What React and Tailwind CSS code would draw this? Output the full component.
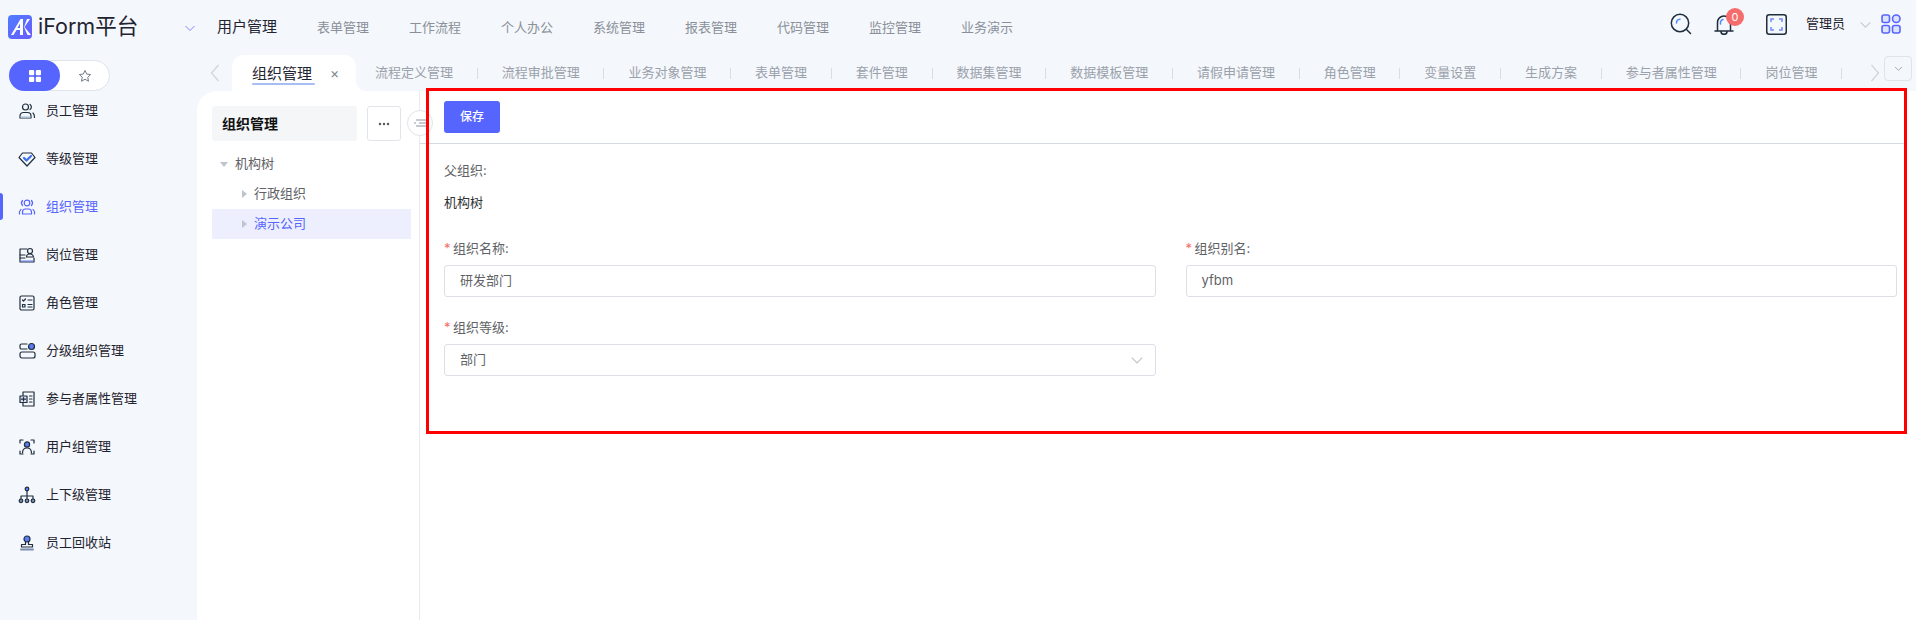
import React from "react";

const S = "#1f2d3d";
const B = "#5b7cf5";

const Ico = ({ children, color = S }) => (
  <svg width="18" height="18" viewBox="0 0 18 18" fill="none" stroke={color} strokeWidth="1.2" strokeLinecap="round" strokeLinejoin="round" className="shrink-0">
    {children}
  </svg>
);

const icons = {
  staff: (
    <Ico>
      <circle cx="7.5" cy="5" r="3" />
      <path d="M2 16v-2a3.5 3.5 0 0 1 3.5-3.5h4A3.5 3.5 0 0 1 13 14v2z" />
      <path d="M2.6 14h9.8v1.6H2.6z" fill="#c9d6f2" stroke="none" />
      <path d="M12 2.5a3 3 0 0 1 0 5M15 11c1 .8 1.5 2 1.5 4.5" />
    </Ico>
  ),
  level: (
    <Ico>
      <path d="M4.5 3h9L17 7.5 9 16 1 7.5z" />
      <path d="M6 8l2.5 2.5L13 6" stroke="#3f6fe8" strokeWidth="2.2" />
    </Ico>
  ),
  org: (
    <Ico color="#5765ff">
      <circle cx="9" cy="5" r="2.8" />
      <path d="M4.5 16v-2a3 3 0 0 1 3-3h3a3 3 0 0 1 3 3v2z" />
      <path d="M4.5 2.5a3.8 3.8 0 0 0 0 5M13.5 2.5a3.8 3.8 0 0 1 0 5M1.5 16v-2.5L3 11.5M16.5 16v-2.5L15 11.5" />
    </Ico>
  ),
  post: (
    <Ico>
      <path d="M9 3H2v13h14v-4" />
      <path d="M2 9h5M2 12h5" />
      <circle cx="12" cy="5" r="2.5" />
      <path d="M8.5 11a3.5 3 0 0 1 7 0z" />
      <path d="M3 15h12" stroke={B} opacity=".5" strokeWidth="2" />
    </Ico>
  ),
  role: (
    <Ico>
      <rect x="2" y="2" width="14" height="14" rx="1.5" />
      <path d="M4.5 6l1 1 2-2M10 6h4M4.5 10.5h2.5v2.5H4.5zM10 10.5h4M10 13h4" />
    </Ico>
  ),
  sub: (
    <Ico>
      <path d="M9 2H3.5A1.5 1.5 0 0 0 2 3.5v2A1.5 1.5 0 0 0 3.5 7H9" />
      <rect x="2" y="10" width="15" height="6" rx="2" />
      <circle cx="13.5" cy="4.5" r="3" fill={B} stroke={S} />
    </Ico>
  ),
  attr: (
    <Ico>
      <path d="M5 2h11v14H5v-3M5 6V2" />
      <rect x="2" y="6" width="7" height="6.5" fill="#dbe3f3" />
      <path d="M5.5 7.5v3.5M3.5 9.2h4M11.5 6H14M11.5 9H14M11.5 12H14" />
    </Ico>
  ),
  group: (
    <Ico>
      <path d="M2 5V2h3M13 2h3v3M2 13v3h3M13 16h3v-3" />
      <circle cx="9" cy="6.5" r="2.6" fill={B} />
      <path d="M4.5 15c0-3 1.8-5 4.5-5s4.5 2 4.5 5" />
    </Ico>
  ),
  tree: (
    <Ico>
      <circle cx="9" cy="3" r="1.8" fill={B} />
      <path d="M9 5v5M3 13v-3h12v3M9 10v3" />
      <circle cx="3" cy="14.8" r="1.8" fill="#7b8db0" />
      <circle cx="9" cy="14.8" r="1.8" fill="#7b8db0" />
      <circle cx="15" cy="14.8" r="1.8" fill="#7b8db0" />
    </Ico>
  ),
  bin: (
    <Ico>
      <circle cx="9" cy="5" r="3" fill={B} />
      <path d="M7.5 8v2.5H3.5V13h11v-2.5h-4V8" />
      <path d="M3 15.5h12" strokeWidth="2" stroke="#7b8db0" />
    </Ico>
  ),
};

const menu = [
  ["员工管理", "staff"],
  ["等级管理", "level"],
  ["组织管理", "org"],
  ["岗位管理", "post"],
  ["角色管理", "role"],
  ["分级组织管理", "sub"],
  ["参与者属性管理", "attr"],
  ["用户组管理", "group"],
  ["上下级管理", "tree"],
  ["员工回收站", "bin"],
];

const navs = ["表单管理", "工作流程", "个人办公", "系统管理", "报表管理", "代码管理", "监控管理", "业务演示"];
const tabs = ["流程定义管理", "流程审批管理", "业务对象管理", "表单管理", "套件管理", "数据集管理", "数据模板管理", "请假申请管理", "角色管理", "变量设置", "生成方案", "参与者属性管理", "岗位管理"];

const Chev = ({ className, color = "#a9b0bb", size = 12, w = 1 }) => (
  <svg width={size} height={size} viewBox="0 0 12 12" fill="none" stroke={color} strokeWidth={w} className={className}>
    <path d="M1.5 4l4.5 4.5L10.5 4" />
  </svg>
);

const Label = ({ children, req }) => (
  <div className="h-[17px] flex items-center text-[13px] leading-[17px] text-[#606266]">
    {req && <span className="text-[#f56c6c] w-[9px]">*</span>}
    {children}
  </div>
);

const Field = ({ label, value, select }) => (
  <div className="flex flex-col gap-[8px]">
    <Label req>{label}</Label>
    <div className="h-[32px] rounded-[3px] border border-[#dcdfe6] bg-white flex items-center justify-between pl-[15px] pr-[11px] text-[13px] text-[#606266]">
      <span>{value}</span>
      {select && <Chev color="#c0c4cc" size={14} />}
    </div>
  </div>
);

export default function App() {
  return (
    <div className="relative w-[1916px] h-[620px] overflow-hidden bg-[#f4f7fb] flex flex-col font-['Inter','Noto_Sans_CJK_SC',sans-serif]">
      {/* header */}
      <header className="h-[55px] shrink-0 flex items-center">
        <div className="flex items-center w-[184px] pl-[8px] gap-[6px] pb-[2px]">
          <svg width="24" height="24" viewBox="0 0 24 24">
            <defs>
              <linearGradient id="lg" x1="0" y1="0" x2="1" y2="1">
                <stop offset="0" stopColor="#4f7cff" />
                <stop offset="1" stopColor="#6a5cff" />
              </linearGradient>
            </defs>
            <rect width="24" height="24" rx="4" fill="url(#lg)" />
            <path d="M3 20L12.5 4h2.5v16h-3v-5H8.5l-3 5z" fill="#fff" />
            <path d="M16.5 12L22 4h-3l-3 8 3.5 8H23z" fill="#fff" />
            <path d="M9.5 13H12V8.5z" fill="#5a6dff" />
          </svg>
          <span className="text-[21.5px] leading-none text-[#1f2430]">iForm平台</span>
        </div>
        <Chev color="#7f86ff" size={12} />
        <span className="ml-[21px] w-[60px] text-[15px] text-[#1f2430]">用户管理</span>
        <nav className="ml-[40px] flex gap-[40px] text-[13px] text-[#8a9099]">
          {navs.map((n) => (
            <span key={n}>{n}</span>
          ))}
        </nav>
        <div className="ml-auto flex items-center pb-[7px]">
          <svg width="22" height="22" viewBox="0 0 22 22" fill="none" stroke={S} strokeWidth="1.5" strokeLinecap="round" className="mr-[22px]">
            <circle cx="10" cy="10" r="8.7" />
            <path d="M16.5 16.5L20.5 20.5" />
            <path d="M6.5 10a3.8 3.8 0 0 1 3.5-3.8" stroke="#4f8cff" />
          </svg>
          <div className="relative mr-[32px] w-[20px] h-[22px]">
            <svg width="20" height="22" viewBox="0 0 20 22" fill="none" stroke={S} strokeWidth="1.5" strokeLinecap="round">
              <path d="M1 18h18M3.5 18V9.5a6.5 6.5 0 0 1 13 0V18" />
              <path d="M7 18.5a3 2.8 0 0 0 6 0" />
              <path d="M6.5 11a3.5 4 0 0 1 2.5-4.5" stroke="#4f8cff" />
            </svg>
            <span className="absolute -top-[5px] left-[12px] w-[18px] h-[18px] rounded-full bg-[#f56c6c] text-white text-[11px] leading-[18px] text-center">0</span>
          </div>
          <svg width="21" height="21" viewBox="0 0 21 21" fill="none" strokeWidth="1.5" className="mr-[19px]">
            <rect x="0.75" y="0.75" width="19.5" height="19.5" rx="2.5" stroke={S} />
            <path d="M5 8V5h3M13 5h3v3M16 13v3h-3M8 16H5v-3" stroke="#6f8dff" />
          </svg>
          <span className="text-[13px] text-[#1f2430] w-[42px]">管理员</span>
          <Chev className="ml-[11px]" color="#c6ccd6" size={13} />
          <svg width="20" height="20" viewBox="0 0 20 20" fill="#dbe3ff" stroke="#5765ff" strokeWidth="1.6" className="ml-[9px] mr-[15px]">
            <rect x="1" y="1" width="7.5" height="7.5" rx="2" />
            <rect x="11.5" y="1" width="7.5" height="7.5" rx="3.7" />
            <rect x="1" y="11.5" width="7.5" height="7.5" rx="2" />
            <rect x="11.5" y="11.5" width="7.5" height="7.5" rx="2" />
          </svg>
        </div>
      </header>

      <div className="flex flex-1 min-h-0">
        {/* sidebar */}
        <aside className="w-[197px] shrink-0 flex flex-col">
          <div className="ml-[9px] mt-[5px] w-[101px] h-[31px] rounded-full bg-white border border-[#dfe3ea] flex">
            <div className="w-[51px] -my-px -ml-px rounded-full bg-[#5765ff] flex items-center justify-center">
              <svg width="12" height="12" viewBox="0 0 12 12" fill="#fff">
                <rect width="5.2" height="5.2" rx="1" />
                <rect x="6.8" width="5.2" height="5.2" rx="1" />
                <rect y="6.8" width="5.2" height="5.2" rx="1" />
                <rect x="6.8" y="6.8" width="5.2" height="5.2" rx="1" />
              </svg>
            </div>
            <div className="flex-1 flex items-center justify-center">
              <svg width="14" height="14" viewBox="0 0 24 24" fill="none" stroke="#6b7482" strokeWidth="1.6" strokeLinejoin="round">
                <path d="M12 2.5l2.9 6.2 6.8.8-5 4.7 1.3 6.8-6-3.4-6 3.4 1.3-6.8-5-4.7 6.8-.8z" />
              </svg>
            </div>
          </div>
          <nav className="mt-[-4px] flex flex-col">
            {menu.map(([t, ic]) => {
              const active = ic === "org";
              return (
                <div key={t} className="relative h-[48px] flex items-center pl-[18px] gap-[10px]">
                  {active && <span className="absolute left-0 top-[10px] w-[3px] h-[27px] rounded-r-[3px] bg-[#5765ff]" />}
                  {icons[ic]}
                  <span className={`text-[13px] ${active ? "text-[#5765ff]" : "text-[#1f2430]"}`}>{t}</span>
                </div>
              );
            })}
          </nav>
        </aside>

        {/* main */}
        <main className="flex-1 min-w-0 flex flex-col">
          <div className="relative h-[36px] shrink-0 flex items-stretch">
            <div className="w-[35px] flex items-center justify-center">
              <svg width="10" height="20" viewBox="0 0 10 20" fill="none" stroke="#cfd5de" strokeWidth="1.2"><path d="M8.5 2L1.5 10l7 8" /></svg>
            </div>
            <div className="relative w-[124px] shrink-0 bg-white rounded-t-[12px] flex items-center pl-[20px] text-[15px] text-[#1f2430]">
              <span className="relative leading-[20px] mt-[2px]">
                组织管理
                <span className="absolute left-0 -right-[3px] -bottom-[1px] h-[2px] rounded bg-[#a9bdf5]" />
              </span>
              <span className="ml-[18px] text-[14px] text-[#7d8590] leading-none">×</span>
              <span className="absolute left-full bottom-0 w-[10px] h-[10px] bg-white">
                <span className="block w-full h-full bg-[#f4f7fb] rounded-bl-[10px]" />
              </span>
            </div>
            <div className="w-[1492px] overflow-hidden flex items-center text-[13px] text-[#9aa1ab]">
              {tabs.map((t) => (
                <div key={t} className="flex items-center shrink-0">
                  <span className="pl-[19px] pr-[23.7px] whitespace-nowrap">{t}</span>
                  <span className="w-px h-[11px] bg-[#d9dee5] mr-[5px]" />
                </div>
              ))}
            </div>
            <div className="absolute left-[1673px] top-[8px] flex">
              <svg width="10" height="20" viewBox="0 0 10 20" fill="none" stroke="#cfd5de" strokeWidth="1.2"><path d="M1.5 2l7 8-7 8" /></svg>
            </div>
            <div className="absolute left-[1687px] top-[1px] w-[28px] h-[25px] rounded-[4px] border border-[#dfe3ea] flex items-center justify-center">
              <Chev color="#8a929e" size={9} />
            </div>
          </div>

          <div className="flex-1 flex bg-white rounded-tl-[20px]">
            {/* tree */}
            <section className="relative w-[223px] shrink-0 border-r border-[#e8ebf0] pl-[15px] pr-[8px] pt-[15px]">
              <div className="flex gap-[10px]">
                <div className="w-[145px] h-[35px] rounded-[3px] bg-[#f5f6f8] flex items-center pl-[10px] text-[14px] font-bold text-[#111]">组织管理</div>
                <div className="w-[34px] h-[35px] rounded-[3px] border border-[#e1e4e9] flex items-center justify-center text-[#555]">
                  <svg width="12" height="4" viewBox="0 0 12 4" fill="currentColor"><circle cx="2" cy="2" r="1.2" /><circle cx="6" cy="2" r="1.2" /><circle cx="10" cy="2" r="1.2" /></svg>
                </div>
              </div>
              <div className="absolute left-[210px] top-[19px] w-[26px] h-[26px] rounded-full bg-white border border-[#e1e4e9] flex items-center justify-center">
                <svg width="14" height="10" viewBox="0 0 14 10" fill="none" stroke="#b4bac4" strokeWidth="1.4"><path d="M3 2h10M6 5h7M3 8h10" /><path d="M1 5h2" /></svg>
              </div>
              <div className="mt-[8px] text-[13px]">
                <div className="h-[30px] flex items-center pl-[8px] gap-[7px] text-[#606266]">
                  <span className="w-0 h-0 border-x-[4px] border-x-transparent border-t-[5px] border-t-[#c0c4cc]" />
                  机构树
                </div>
                <div className="h-[30px] flex items-center pl-[30px] gap-[7px] text-[#606266]">
                  <span className="w-0 h-0 border-y-[4px] border-y-transparent border-l-[5px] border-l-[#c0c4cc]" />
                  行政组织
                </div>
                <div className="h-[30px] flex items-center pl-[30px] gap-[7px] bg-[#eeeffe] text-[#5765ff]">
                  <span className="w-0 h-0 border-y-[4px] border-y-transparent border-l-[5px] border-l-[#c0c4cc]" />
                  演示公司
                </div>
              </div>
            </section>

            {/* form */}
            <section className="flex-1 min-w-0">
              <div className="h-[53px] mr-[12px] border-b border-[#d5dae2] pl-[24px] pt-[10px]">
                <button className="w-[56px] h-[32px] rounded-[3px] bg-[#5765ff] text-white text-[12px] font-medium">保存</button>
              </div>
              <div className="pl-[24px] pr-[19px] pt-[18px]">
                <Label>父组织:</Label>
                <div className="mt-[15px] h-[17px] leading-[17px] text-[13px] text-[#303133]">机构树</div>
                <div className="mt-[29px] grid grid-cols-2 gap-x-[30px] gap-y-[22px]">
                  <Field label="组织名称:" value="研发部门" />
                  <Field label="组织别名:" value="yfbm" />
                  <Field label="组织等级:" value="部门" select />
                </div>
              </div>
            </section>
          </div>
        </main>
      </div>

      {/* annotation */}
      <div className="absolute left-[426px] top-[88px] w-[1481px] h-[346px] border-[3px] border-[#ff0000] pointer-events-none" />
    </div>
  );
}
